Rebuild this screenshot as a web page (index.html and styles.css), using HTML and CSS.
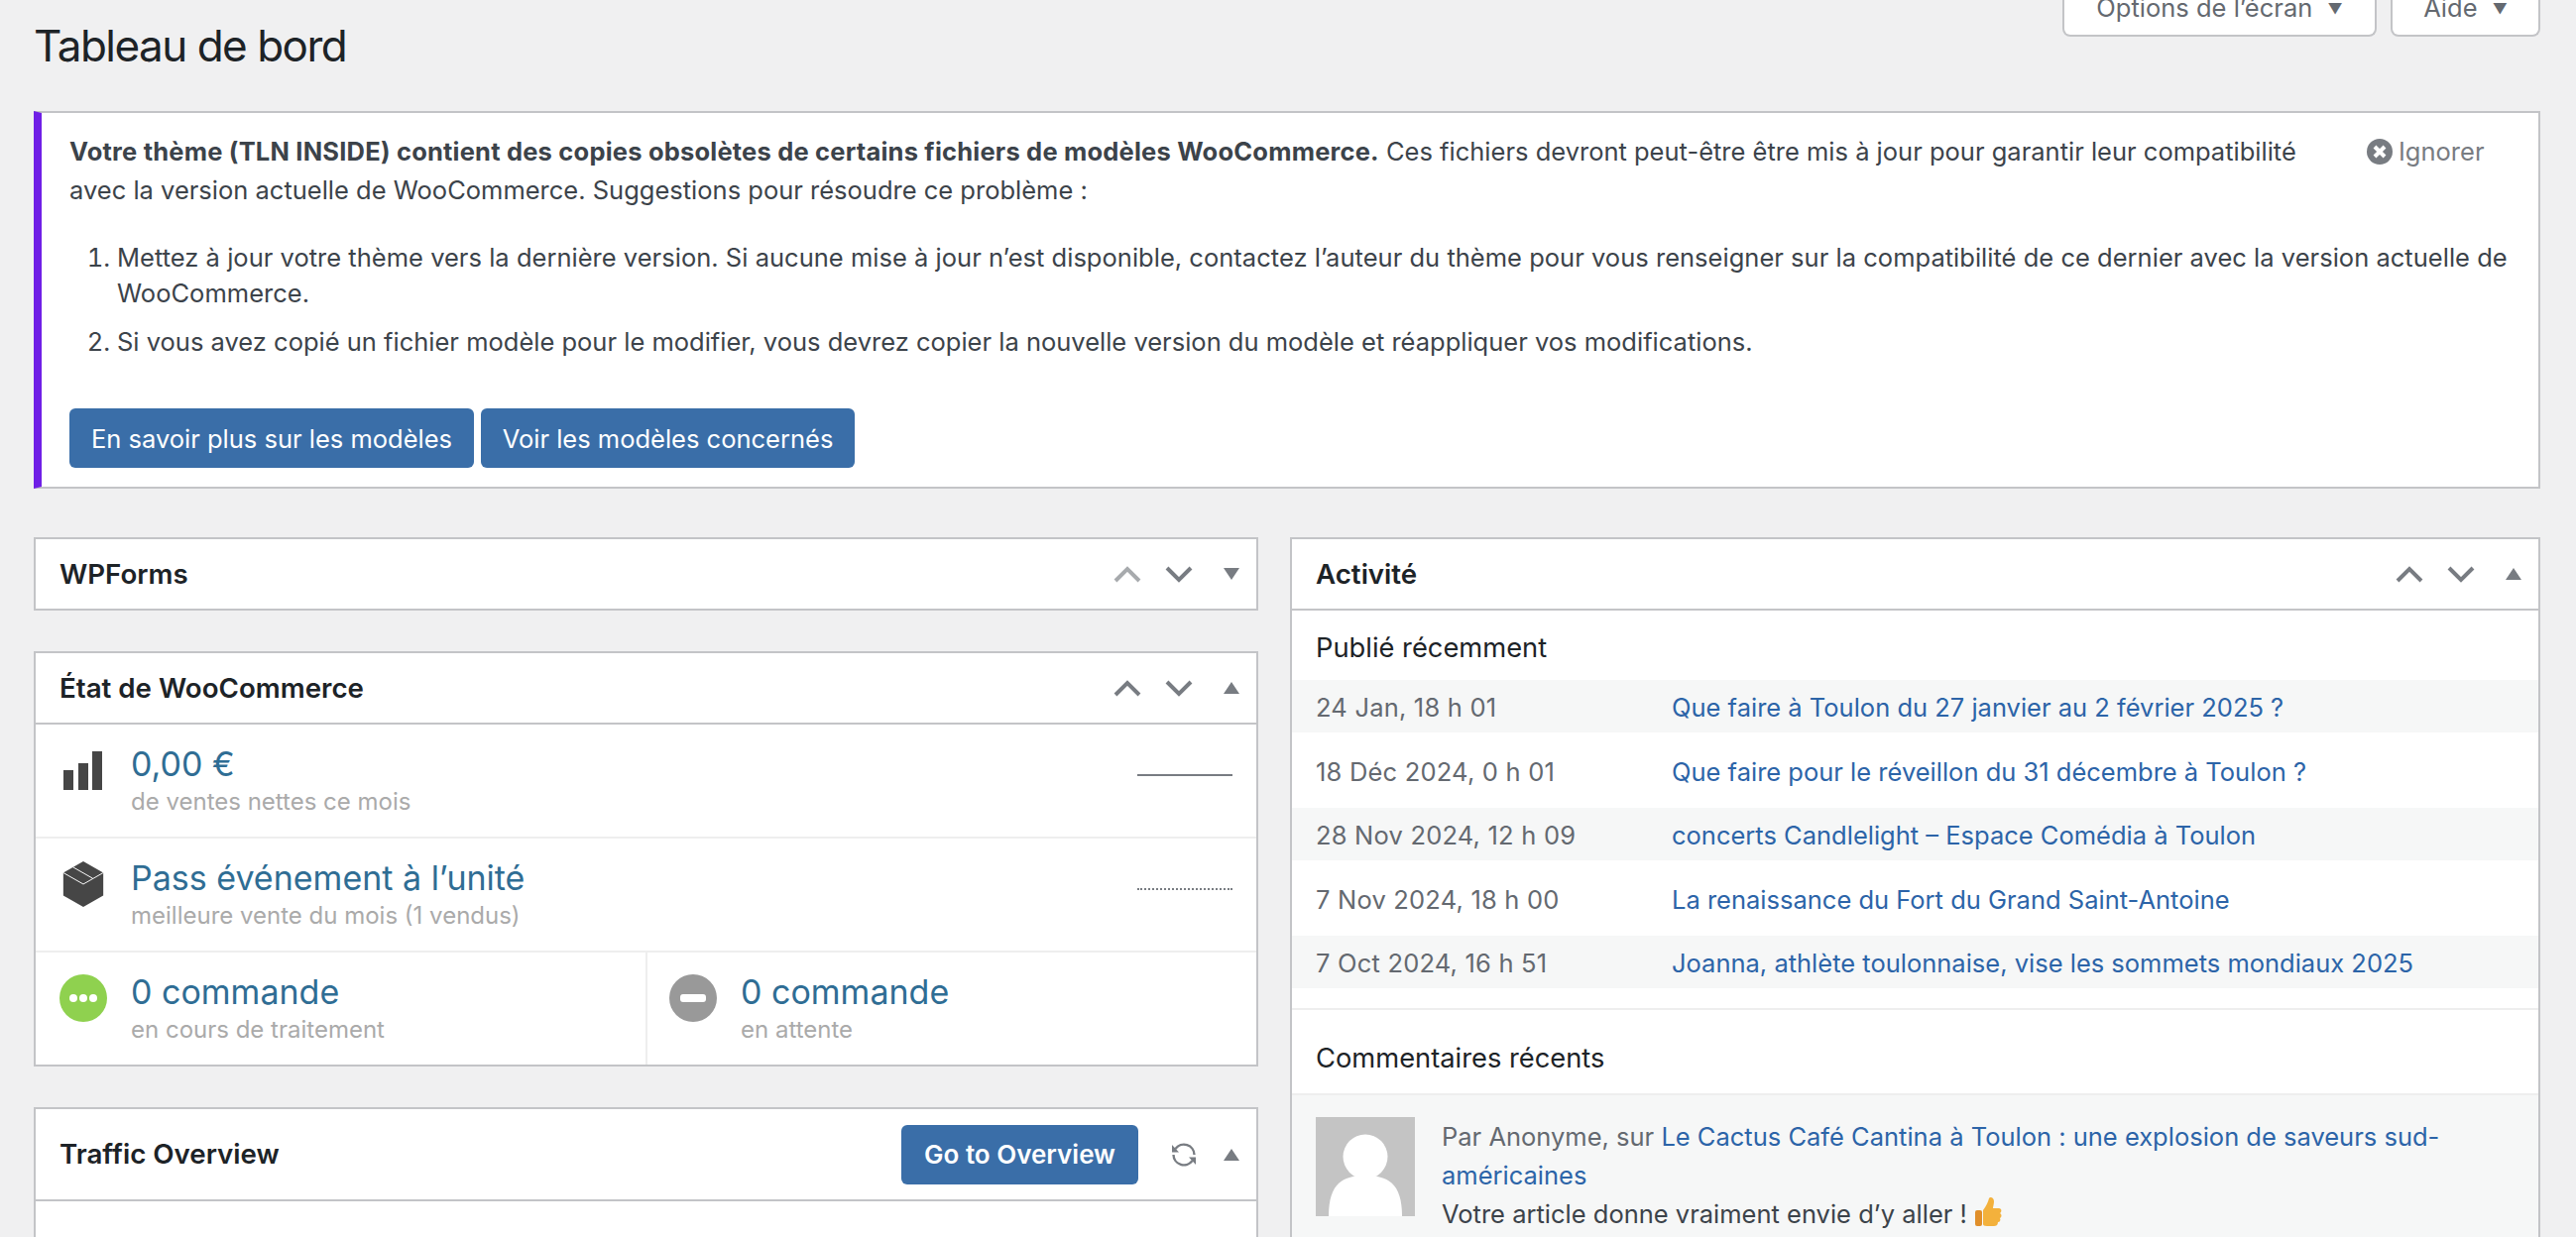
FILE: index.html
```html
<!DOCTYPE html>
<html lang="fr">
<head>
<meta charset="utf-8">
<title>Tableau de bord</title>
<link rel="stylesheet" href="styles.css">
</head>
<body>
<div class="page">
  <header class="top">
    <h1>Tableau de bord</h1>
    <div class="tabs">
      <button class="tab tab-options">Options de l’écran <span class="tri">▼</span></button>
      <button class="tab tab-help">Aide <span class="tri">▼</span></button>
    </div>
  </header>

  <section class="notice">
    <a class="dismiss"><svg class="dismiss-icon" viewBox="0 0 26 26"><circle cx="13" cy="13" r="13" fill="#787c82"/><path d="M8 8l10 10M18 8L8 18" stroke="#fff" stroke-width="4"/></svg>Ignorer</a>
    <p class="notice-lead"><strong>Votre thème (TLN INSIDE) contient des copies obsolètes de certains fichiers de modèles WooCommerce.</strong> Ces fichiers devront peut-être être mis à jour pour garantir leur compatibilité avec la version actuelle de WooCommerce. Suggestions pour résoudre ce problème :</p>
    <ol class="notice-list">
      <li>Mettez à jour votre thème vers la dernière version. Si aucune mise à jour n’est disponible, contactez l’auteur du thème pour vous renseigner sur la compatibilité de ce dernier avec la version actuelle de WooCommerce.</li>
      <li>Si vous avez copié un fichier modèle pour le modifier, vous devrez copier la nouvelle version du modèle et réappliquer vos modifications.</li>
    </ol>
    <div class="notice-actions">
      <a class="btn btn-a">En savoir plus sur les modèles</a>
      <a class="btn btn-b">Voir les modèles concernés</a>
    </div>
  </section>

  <main class="dash">
    <div class="col">
      <section class="box">
        <div class="box-head closed">
          <h2>WPForms</h2>
          <div class="ctrls">
            <svg class="chev faded" viewBox="0 0 28 17"><path d="M2 15L14 3l12 12"/></svg>
            <svg class="chev" viewBox="0 0 28 17"><path d="M2 2l12 12L26 2"/></svg>
            <svg class="tri-icon" viewBox="0 0 16 12"><path d="M0 0h16L8 12z"/></svg>
          </div>
        </div>
      </section>

      <section class="box">
        <div class="box-head">
          <h2>État de WooCommerce</h2>
          <div class="ctrls">
            <svg class="chev" viewBox="0 0 28 17"><path d="M2 15L14 3l12 12"/></svg>
            <svg class="chev" viewBox="0 0 28 17"><path d="M2 2l12 12L26 2"/></svg>
            <svg class="tri-icon" viewBox="0 0 16 12"><path d="M8 0l8 12H0z"/></svg>
          </div>
        </div>
        <div class="stat stat-wide">
          <svg class="stat-icon" viewBox="0 0 48 48"><path fill="#464646" d="M4 24h10v20H4zM19 17h10v27H19zM33 5h10v39H33z"/></svg>
          <div class="stat-text"><div class="stat-num">0,00 €</div><div class="stat-sub">de ventes nettes ce mois</div></div>
          <span class="spark"></span>
        </div>
        <div class="stat stat-wide">
          <svg class="stat-icon" viewBox="0 0 48 50"><path fill="#464646" d="M24 1l21 12v24L24 49 3 37V13z"/><path fill="none" stroke="#fff" stroke-width="1" d="M3 13l21 12 21-12M13 7l21 12"/></svg>
          <div class="stat-text"><div class="stat-num">Pass événement à l’unité</div><div class="stat-sub">meilleure vente du mois (1 vendus)</div></div>
          <span class="spark dotted"></span>
        </div>
        <div class="stat-pair">
          <div class="stat stat-half">
            <svg class="stat-icon" viewBox="0 0 48 48"><circle cx="24" cy="24" r="24" fill="#8fd14f"/><circle cx="14" cy="24" r="4" fill="#fff"/><circle cx="24" cy="24" r="4" fill="#fff"/><circle cx="34" cy="24" r="4" fill="#fff"/></svg>
            <div class="stat-text"><div class="stat-num">0 commande</div><div class="stat-sub">en cours de traitement</div></div>
          </div>
          <div class="stat stat-half">
            <svg class="stat-icon" viewBox="0 0 48 48"><circle cx="24" cy="24" r="24" fill="#999"/><rect x="11" y="20" width="26" height="8" rx="3" fill="#fff"/></svg>
            <div class="stat-text"><div class="stat-num">0 commande</div><div class="stat-sub">en attente</div></div>
          </div>
        </div>
      </section>

      <section class="box">
        <div class="box-head tall">
          <h2>Traffic Overview</h2>
          <div class="ctrls">
            <a class="btn btn-go">Go to Overview</a>
            <svg class="refresh" viewBox="0 0 24 24"><path fill="none" stroke="#787c82" stroke-width="2.400" d="M3.500 6A10.500 10.500 0 0 1 22.500 12M20.500 18A10.500 10.500 0 0 1 1.500 12"/><path fill="#787c82" d="M0 2v7.500h7zM24 22v-7.500h-7z"/></svg>
            <svg class="tri-icon" viewBox="0 0 16 12"><path d="M8 0l8 12H0z"/></svg>
          </div>
        </div>
        <div class="box-fill"></div>
      </section>
    </div>

    <div class="col">
      <section class="box">
        <div class="box-head">
          <h2>Activité</h2>
          <div class="ctrls">
            <svg class="chev" viewBox="0 0 28 17"><path d="M2 15L14 3l12 12"/></svg>
            <svg class="chev" viewBox="0 0 28 17"><path d="M2 2l12 12L26 2"/></svg>
            <svg class="tri-icon" viewBox="0 0 16 12"><path d="M8 0l8 12H0z"/></svg>
          </div>
        </div>
        <div class="recent">
          <h3>Publié récemment</h3>
          <ul class="rows">
            <li><span class="date">24 Jan, 18 h 01</span><a>Que faire à Toulon du 27 janvier au 2 février 2025 ?</a></li>
            <li><span class="date">18 Déc 2024, 0 h 01</span><a>Que faire pour le réveillon du 31 décembre à Toulon ?</a></li>
            <li><span class="date">28 Nov 2024, 12 h 09</span><a>concerts Candlelight – Espace Comédia à Toulon</a></li>
            <li><span class="date">7 Nov 2024, 18 h 00</span><a>La renaissance du Fort du Grand Saint-Antoine</a></li>
            <li><span class="date">7 Oct 2024, 16 h 51</span><a>Joanna, athlète toulonnaise, vise les sommets mondiaux 2025</a></li>
          </ul>
        </div>
        <div class="comments">
          <h3>Commentaires récents</h3>
          <div class="comment">
            <svg class="avatar" viewBox="0 0 100 100"><rect width="100" height="100" fill="#c4c4c4"/><circle cx="50" cy="40" r="22.500" fill="#fff"/><path fill="#fff" d="M13 100c0-34 15-41 37-41s37 7 37 41z"/></svg>
            <div class="comment-text">
              <p class="meta">Par Anonyme, sur <a>Le Cactus Café Cantina à Toulon : une explosion de saveurs sud-américaines</a></p>
              <p class="body-text">Votre article donne vraiment envie d’y aller ! <svg class="thumb" viewBox="0 0 28 32"><path fill="#f3b13c" d="M9 14c3-4 5-8 6-12 1-2 5-1 5 3 0 3-1 5-1 7h6c3 0 3 4 1 5 2 1 2 4 0 5 1 2 0 4-2 4 0 3-2 4-4 4H13c-3 0-4-1-4-2z"/><rect x="1" y="14" width="7" height="16" rx="2" fill="#e08f2b"/></svg></p>
            </div>
          </div>
        </div>
      </section>
    </div>
  </main>
</div>
</body>
</html>
```

FILE: styles.css
```css
* { box-sizing: border-box; }
html, body { margin: 0; height: 100%; overflow: hidden; background: #f0f0f1; }
body { font-family: Inter, "Liberation Sans", sans-serif; font-size: 25.500px; line-height: 39px; color: #3c434a; }
p, ul, ol, h1, h2, h3 { margin: 0; padding: 0; }
a { color: #2c64a8; text-decoration: none; }

.page { height: 1248px; overflow: hidden; padding: 0 36px 0 34px; }

.top { height: 112px; display: flex; justify-content: space-between; align-items: flex-start; }
h1 { font-size: 44px; font-weight: 400; letter-spacing: -1.500px; line-height: 56px; color: #1d2327; padding-top: 18px; }
.tabs { display: flex; gap: 14px; margin-top: -13px; }
.tab { height: 50px; font: inherit; font-size: 25.500px; line-height: 38px; color: #646970; background: #fff; border: 2px solid #c3c4c7; border-top: 0; border-radius: 0 0 8px 8px; padding: 0 0 6px; }
.tab-options { width: 317px; }
.tab-help { width: 151px; }
.tri { font-size: 15px; margin-left: 8px; vertical-align: 3px; color: #646970; }

.notice { position: relative; height: 381px; background: #fff; border: 2px solid #c3c4c7; border-left: 8px solid #6f1fe6; padding: 19px 14px 0 28px; }
.notice-lead { padding-right: 190px; }
.notice-lead strong { letter-spacing: 0.200px; }
.notice-list { margin-top: 31px; padding-left: 48px; line-height: 36px; }
.notice-list li:first-child { letter-spacing: 0.020px; }
.notice-list li + li { margin-top: 13px; }
.notice-actions { display: flex; gap: 7px; margin-top: 49px; }
.btn { display: flex; align-items: center; justify-content: center; color: #fff; background: #3a6ea8; border-radius: 6px; }
.btn-a { width: 408px; height: 60px; }
.btn-b { width: 377px; height: 60px; }
.dismiss { position: absolute; top: 19px; left: 2345px; display: flex; align-items: center; gap: 6px; color: #787c82; }
.dismiss-icon { width: 26px; height: 26px; }

.dash { display: grid; grid-template-columns: 1235px 1261px; gap: 32px; margin-top: 49px; }
.col { display: flex; flex-direction: column; gap: 41px; }
.box { background: #fff; border: 2px solid #c3c4c7; }
.box-head { height: 72px; padding: 0 17px 0 24px; display: flex; align-items: center; justify-content: space-between; border-bottom: 2px solid #c3c4c7; }
.box-head.closed { height: 70px; border-bottom: 0; }
.box-head.tall { height: 93px; }
h2 { font-size: 27.700px; font-weight: 600; color: #1d2327; }
.ctrls { display: flex; align-items: center; }
.chev { width: 28px; height: 17px; margin-right: 24px; }
.chev path { fill: none; stroke: #787c82; stroke-width: 4; }
.chev.faded path { stroke: #a7aaad; }
.tri-icon { width: 16px; height: 12px; fill: #787c82; margin-left: 7px; }

.stat { display: flex; position: relative; height: 115px; padding: 18px 0 0 24px; gap: 24px; border-bottom: 2px solid #eee; }
.stat-icon { width: 48px; height: 48px; flex: none; margin-top: 4px; }
.stat-num { font-size: 34px; line-height: 44px; color: #2f6d94; }
.stat-sub { font-size: 24px; line-height: 31px; color: #aaa; }
.stat-text { flex: 1; }
.spark { position: absolute; right: 24px; top: 50px; width: 96px; border-top: 2px solid #787c82; }
.spark.dotted { border-top-style: dotted; }
.stat-pair { display: grid; grid-template-columns: 615px 1fr; }
.stat-pair .stat { border-bottom: 0; height: 113px; }
.stat-pair .stat + .stat { border-left: 2px solid #eee; padding-left: 22px; }

.btn-go { width: 239px; height: 60px; font-weight: 600; margin-right: 34px; font-size: 26px; }
.refresh { width: 24px; height: 24px; margin-right: 21px; }
.box-fill { height: 400px; }

h3 { font-size: 27.300px; font-weight: 400; color: #1d2327; }
.recent { padding-top: 18px; border-bottom: 2px solid #eee; padding-bottom: 20px; }
.recent h3 { padding-left: 24px; height: 52px; }
.rows { list-style: none; }
.rows li { display: flex; align-items: center; padding: 2px 24px 0; }
.rows li:nth-child(odd) { background: #f6f7f7; height: 53px; }
.rows li:nth-child(even) { height: 76px; }
.rows .date { width: 359px; flex: none; color: #646970; letter-spacing: 0.200px; }
.comments h3 { padding: 29px 0 16px 24px; border-bottom: 2px solid #eee; }
.comment { display: flex; gap: 27px; background: #f6f7f7; padding: 22px 24px 40px 24px; }
.avatar { width: 100px; height: 100px; flex: none; }
.meta { color: #646970; }
.thumb { width: 28px; height: 32px; vertical-align: -5px; }
```
